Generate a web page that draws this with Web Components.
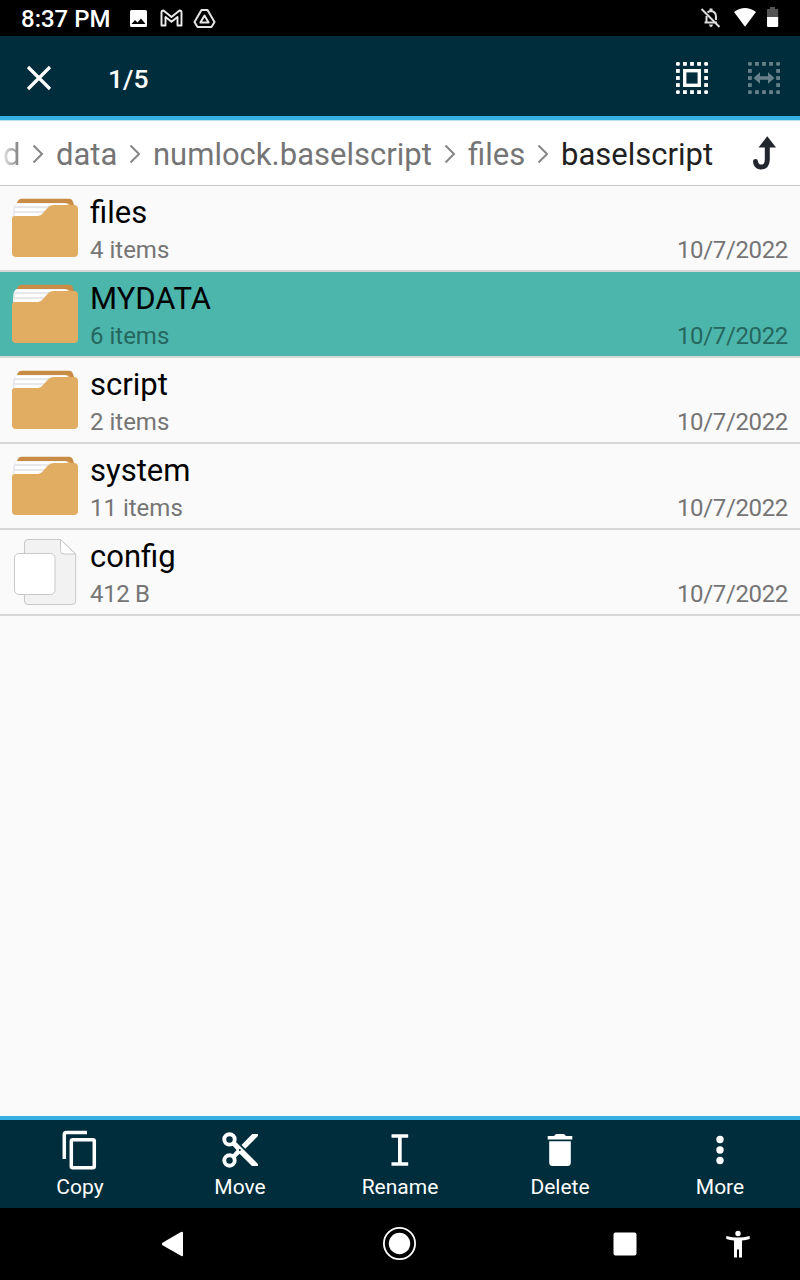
<!DOCTYPE html>
<html lang="en">
<head>
<meta charset="utf-8">
<title>Files</title>
<style>
html,body{margin:0;height:100%;background:#fafafa}
body{font-family:Roboto,"Noto Sans",sans-serif;overflow:hidden}
</style>
</head>
<body>
<file-app></file-app>
<script>
const ICONS = {
  image: [128,8,20,20,'<path fill="#fff" fill-rule="evenodd" d="M131.500 10H145.500Q147 10 147 11.500V25.500Q147 27 145.500 27H131.500Q130 27 130 25.500V11.500Q130 10 131.500 10ZM131.500 24H145.500L141 18.500L137.500 22.500L135 20Z"/>'],
  mail: [160,8,23,20,'<path fill="none" stroke="#eee" stroke-width="1.900" stroke-linejoin="round" d="M161.500 12.500Q161.500 10.500 163.500 10.500L171.500 17L179.500 10.500Q181.500 10.500 181.500 12.500V25.500H177.500V17L171.500 21.700L165.500 17V25.500H161.500Z"/>'],
  drive: [193,8,24,20,'<g fill="none" stroke="#e4e4e4" stroke-width="2" stroke-linejoin="round"><path d="M201.500 10H207.500L214.500 22L211.500 27H197.500L194.500 22Z"/><path d="M204.500 15.500L208.600 22.500H200.400Z"/></g>'],
  bell: [700,7,22,22,'<g fill="none" stroke="#ddd" stroke-width="2"><path d="M706.500 22V16M704.500 22.500H717M707.500 12.500Q709 11 711 11Q716 11.500 716 17V20"/><path stroke-width="2" d="M701.500 9L719.500 27"/></g><path fill="#ddd" d="M709.500 8.500h3v3h-3ZM709 24.500h4q-.5 2.500-2 2.500t-2-2.500Z"/>'],
  wifi: [733,7,24,21,'<path fill="#fff" d="M734 12Q745 4 756 12L745 26.800Z"/>'],
  battery: [766,6,13,22,'<path fill="#555" d="M770 7h5v2h2.500q.7 0 .7.700V17H767V9.700q0-.7.700-.7H770Z"/><path fill="#fff" d="M767 17h11.200v9q0 1-1 1h-9.200q-1 0-1-1Z"/>'],
  close: [26,65,26,26,'<path fill="none" stroke="#fff" stroke-width="3.200" d="M28 67L50 89M50 67L28 89"/>'],
  selectAll: [674,60,36,36,'DOTS<rect x="684.700" y="70.700" width="14.600" height="14.600" fill="none" stroke="#fff" stroke-width="3.400"/>'],
  selectRange: [746,60,36,36,'<g opacity=".4">DOTS<path fill="#fff" d="M753.500 78L760 72.300V76.200H768V72.300L774.500 78L768 83.700V79.800H760V83.700Z"/></g>'],
  chevron: [32,144,12,20,'<path fill="none" stroke="#858585" stroke-width="2" d="M33.500 145.500L42 154L33.500 162.500"/>'],
  up: [750,134,28,38,'<path fill="#23272d" d="M767.300 136.300L776 147.500H758.500Z"/><path fill="none" stroke="#23272d" stroke-width="5" stroke-linecap="round" d="M767.300 146V160Q767 167.300 760.500 167Q756 166.500 755.500 161.500"/>'],
  folder: [10,196,70,64,'<path fill="#c98c46" d="M17 203Q18 198.700 22 198.700H69Q72 198.700 73 202L75 208H17Z"/><path fill="#e1ad62" d="M60 207V203H66Q71 203 71.500 207Z"/><path fill="#e6e8ec" d="M13 220V212Q13 204 17 203H64Q68 203 69 206V225H13Z"/><path fill="#fff" d="M16 203.500H66Q68 204 68 206H15ZM15 208.300H60V211H15ZM14.500 213H60V219H14Z"/><path fill="#e1ad62" d="M15 216H38Q41 216 43 213L47.500 208Q50 205 54 205H74Q78 205 78 209V253Q78 257 74 257H16Q12 257 12 253V219Q12 216 15 216Z"/>'],
  file: [12,537,66,70,'<g stroke="#c8c8c8" stroke-width="1"><path fill="#f2f2f2" d="M28 539.500H60.500L75.700 554V601Q75.700 604.500 72 604.500H28Q24.500 604.500 24.500 601V543Q24.500 539.500 28 539.500Z"/><path fill="#fff" d="M60.500 539.500L75.500 554H64Q60.500 554 60.500 550.500Z"/><rect x="14.500" y="553.500" width="40.500" height="41" rx="4.500" fill="#fff"/></g>'],
  copy: [61,1130,38,40,'<g fill="none" stroke="#fff" stroke-width="3.500"><path d="M87 1132.500H66.500Q64.300 1132.500 64.300 1134.500V1159"/><rect x="71.300" y="1139.700" width="23" height="28" rx="1.500"/></g>'],
  cut: [220,1130,40,40,'<g fill="none" stroke="#fff" stroke-width="3.900"><circle cx="229.500" cy="1139.400" r="5.200"/><circle cx="229.500" cy="1160.500" r="5.200"/></g><path fill="#fff" d="M235 1141L258 1164V1166H252L239.600 1153.800L234.500 1158.800L231.500 1155.800L236.600 1150L231.500 1144.500ZM241.500 1145L252.200 1134H258V1136L245.300 1148.700Z"/><circle cx="239.800" cy="1150" r="1" fill="#002d3c"/>'],
  rename: [380,1130,40,40,'<path fill="#fff" d="M391.500 1134.300H408.200V1137.700H401.700V1162.300H408.200V1165.700H391.500V1162.300H398V1137.700H391.500Z"/>'],
  trash: [540,1130,40,40,'<path fill="#fff" d="M547.700 1136H554L556 1134H564L566 1136H572.300V1139.500H547.700ZM549.200 1141.200H570.800V1162.500Q570.800 1166 567.300 1166H552.700Q549.200 1166 549.200 1162.500Z"/>'],
  more: [700,1130,40,40,'<g fill="#fff"><circle cx="720" cy="1139.500" r="3.700"/><circle cx="720" cy="1150" r="3.700"/><circle cx="720" cy="1160.500" r="3.700"/></g>'],
  back: [160,1230,24,28,'<path fill="#fff" d="M162.500 1242.800L180.500 1232.200Q183 1231 183 1233V1255Q183 1257 180.500 1255.600L162.500 1245.200Q161 1244 162.500 1242.800Z"/>'],
  home: [382,1226,35,35,'<circle cx="399.500" cy="1243.500" r="15.600" fill="none" stroke="#fff" stroke-width="1.800"/><circle cx="399.500" cy="1243.500" r="10.700" fill="#fff"/>'],
  recent: [612,1231,26,26,'<rect x="613.500" y="1232.500" width="23" height="23" rx="2" fill="#fff"/>'],
  access: [725,1229,26,30,'<circle cx="738" cy="1233.500" r="2.700" fill="#fff"/><path fill="#fff" d="M726.300 1236Q738 1239 749.700 1236V1239Q746 1240 742 1240.500V1257.500H739V1249.500H737V1257.500H734V1240.500Q730 1240 726.300 1239Z"/>']
};

/* dotted frame: five cells a side, rounded corners */
function dots(x, y) {
  let s = '';
  for (let i = 0; i < 5; i++) for (let j = 0; j < 5; j++)
    if (i % 4 === 0 || j % 4 === 0) s += `<rect x="${x + i * 7.05}" y="${y + j * 7.05}" width="3.800" height="3.800" rx="${i % 4 === 0 && j % 4 === 0 ? 1.3 : 0}"/>`;
  return `<g fill="#fff">${s}</g>`;
}

function define(name, html, setup) {
  const t = document.createElement('template');
  t.innerHTML = html;
  customElements.define(name, class extends HTMLElement {
    connectedCallback() {
      if (this.shadowRoot) return;
      this.attachShadow({mode: 'open'}).append(t.content.cloneNode(true));
      if (setup) setup(this, this.shadowRoot);
    }
  });
}

function drawIcon(root, name) {
  const icon = document.createElement('ui-icon');
  icon.setAttribute('name', name);
  root.querySelector('i').replaceWith(icon);
}

define('ui-icon', '<style>:host{display:block;flex:none}svg{display:block}</style><div></div>', (el, root) => {
  const [x, y, w, h, body] = ICONS[el.getAttribute('name')];
  root.querySelector('div').innerHTML =
    `<svg width="${w}" height="${h}" viewBox="${x} ${y} ${w} ${h}" aria-hidden="true">${body.replace('DOTS', dots(x + 2, y + 2))}</svg>`;
});

define('status-bar', `<style>
:host{display:flex;height:36px;background:#000;color:#fff;box-sizing:border-box;padding:0 21px 0 21px;align-items:flex-start}
b{font-weight:500;font-size:24px;line-height:36px;width:107px;white-space:nowrap;padding-top:1px}
ui-icon{margin-top:8px}.s{flex:1}
</style><b>8:37 PM</b><ui-icon name="image"></ui-icon><ui-icon name="mail" style="margin-left:12px"></ui-icon><ui-icon name="drive" style="margin-left:10px"></ui-icon><span class="s"></span><ui-icon name="bell" style="margin-top:7px"></ui-icon><ui-icon name="wifi" style="margin:7px 9px 0 11px"></ui-icon><ui-icon name="battery" style="margin-top:6px"></ui-icon>`);

define('selection-bar', `<style>
:host{display:flex;height:84px;box-sizing:border-box;background:#002d3c;border-bottom:4px solid #35b0e3;color:#fff;align-items:center;padding:4px 18px 0 26px}
span{font-size:26.5px;font-weight:500;line-height:32px;margin-left:56px;flex:1;padding-top:2px}
</style><ui-icon name="close"></ui-icon><span><slot></slot></span><ui-icon name="selectAll"></ui-icon><ui-icon name="selectRange" style="margin-left:36px"></ui-icon>`);

define('path-bar', `<style>
:host{display:flex;height:66px;box-sizing:border-box;background:#fff;border-top:1px solid #b8dff0;border-bottom:1px solid #c9c9c9;color:#757575;align-items:center;font-size:31px;line-height:36px;white-space:nowrap;padding:2px 22px 0 3px}
.d{color:transparent;background:linear-gradient(90deg,#e5e5e5,#757575 18px);-webkit-background-clip:text;background-clip:text}
.c{color:#212121;flex:1}
span{flex:none;box-sizing:border-box;padding:2px 0 0 12px}
span.d{padding-left:0}
</style><span class="d" style="width:29px">d</span><ui-icon name="chevron"></ui-icon><span style="width:85px">data</span><ui-icon name="chevron"></ui-icon><span style="width:303px">numlock.baselscript</span><ui-icon name="chevron"></ui-icon><span style="width:81px">files</span><ui-icon name="chevron"></ui-icon><span class="c">baselscript</span><ui-icon name="up" style="margin-bottom:2px"></ui-icon>`);

define('file-row', `<style>
:host{display:grid;grid-template-columns:80px 1fr auto;height:86px;box-sizing:border-box;border-bottom:2px solid #d7d7d7;padding:0 12px 0 10px;color:#757575;font-size:24px}
:host([selected]){background:#4db6ac;color:#25675f}
ui-icon{padding-top:10px}
:host([icon=file]) ui-icon{padding:7px 0 0 2px}
h2{margin:0;font-weight:400;font-size:31px;line-height:36px;color:#000;padding-top:9px}
p{margin:0;line-height:28px;padding-top:5px}
:host([icon=file]) p{letter-spacing:-.35px}
.r{padding-top:50px;line-height:28px;letter-spacing:-.35px}
</style><i></i><div><h2></h2><p><slot></slot></p></div><div class="r">10/7/2022</div>`, (el, root) => {
  root.querySelector('h2').textContent = el.getAttribute('name');
  drawIcon(root, el.getAttribute('icon') || 'folder');
});

define('action-button', `<style>
:host{display:flex;flex:1;flex-direction:column;align-items:center;color:#fff;font-size:21px;line-height:26px}
span{padding-top:4px}
</style><i></i><span><slot></slot></span>`, (el, root) => drawIcon(root, el.getAttribute('icon')));

define('action-bar', `<style>:host{display:flex;height:92px;box-sizing:border-box;background:#002d3c;border-top:4px solid #35b0e3;padding-top:10px}</style><slot></slot>`);

define('nav-bar', `<style>
:host{display:flex;height:72px;background:#000;align-items:center;padding-left:160px}
ui-icon{margin-top:-1px}
</style><ui-icon name="back"></ui-icon><ui-icon name="home" style="margin-left:198px"></ui-icon><ui-icon name="recent" style="margin-left:195px"></ui-icon><ui-icon name="access" style="margin-left:87px"></ui-icon>`);

define('file-app', `<style>
:host{display:flex;flex-direction:column;height:1280px;width:800px;background:#fafafa}
main{flex:1}
</style>
<status-bar></status-bar><selection-bar>1/5</selection-bar><path-bar></path-bar>
<main>
<file-row name="files">4 items</file-row>
<file-row name="MYDATA" selected>6 items</file-row>
<file-row name="script">2 items</file-row>
<file-row name="system">11 items</file-row>
<file-row name="config" icon="file">412 B</file-row>
</main>
<action-bar><action-button icon="copy">Copy</action-button><action-button icon="cut">Move</action-button><action-button icon="rename">Rename</action-button><action-button icon="trash">Delete</action-button><action-button icon="more">More</action-button></action-bar>
<nav-bar></nav-bar>`);
</script>
</body>
</html>
